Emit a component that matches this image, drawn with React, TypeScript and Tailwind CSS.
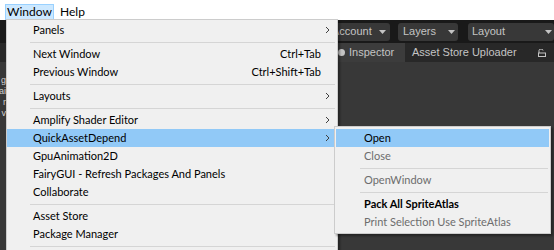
import React from "react";

const menuFont = { fontFamily: 'Lato, "Noto Sans CJK SC", sans-serif' };

function Chevron() {
  return (
    <svg width="5" height="8" viewBox="0 0 5 8" className="block">
      <path d="M1 1 L4 4 L1 7" fill="none" stroke="#404040" strokeWidth="1" />
    </svg>
  );
}

function Caret() {
  return (
    <svg width="7" height="4" viewBox="0 0 7 4" className="block">
      <path d="M0 0 H7 L3.5 4 Z" fill="#c4c4c4" />
    </svg>
  );
}

type Item = {
  label?: string;
  shortcut?: string;
  sub?: boolean;
  sep?: boolean;
  active?: boolean;
  disabled?: boolean;
  bold?: boolean;
};

const mainItems: Item[] = [
  { label: "Panels", sub: true },
  { sep: true },
  { label: "Next Window", shortcut: "Ctrl+Tab" },
  { label: "Previous Window", shortcut: "Ctrl+Shift+Tab" },
  { sep: true },
  { label: "Layouts", sub: true },
  { sep: true },
  { label: "Amplify Shader Editor", sub: true },
  { label: "QuickAssetDepend", sub: true, active: true },
  { label: "GpuAnimation2D" },
  { label: "FairyGUI - Refresh Packages And Panels" },
  { label: "Collaborate" },
  { sep: true },
  { label: "Asset Store" },
  { label: "Package Manager" },
  { sep: true },
];

const subItems: Item[] = [
  { label: "Open", active: true },
  { label: "Close", disabled: true },
  { sep: true },
  { label: "OpenWindow", disabled: true },
  { sep: true },
  { label: "Pack All SpriteAtlas", bold: true },
  { label: "Print Selection Use SpriteAtlas", disabled: true },
];

function Separator({ indent }: { indent: string }) {
  return (
    <div className={`h-[6px] flex items-center ${indent} mr-[2px]`}>
      <div className="h-px flex-1 bg-[#d5d5d5]" />
    </div>
  );
}

export default function App() {
  return (
    <div
      className="relative w-[554px] h-[250px] overflow-hidden bg-[#383838] text-[11px]"
      style={menuFont}
    >
      {/* Menubar */}
      <div className="h-[20px] bg-white flex items-start pt-[4px] pl-[5px] text-[12px]">
        <div className="h-[16px] w-[49px] flex items-center justify-center bg-[#cce8ff] border border-[#99d1ff] text-black leading-none">
          Window
        </div>
        <div className="h-[16px] pl-[6px] flex items-center text-black leading-none">Help</div>
      </div>

      {/* Editor behind */}
      <div style={{ fontFamily: '"Liberation Sans", Arial, sans-serif' }} className="text-[#c4c4c4] text-[11px]">
        <div className="h-[23px] bg-[#191919] flex items-center pl-[326px] gap-[8px]">
          <div className="w-[66px] h-[18px] rounded-[3px] bg-[#383838] flex items-center justify-between pl-[6px] pr-[4px]">
            <span>Account</span>
            <Caret />
          </div>
          <div className="w-[62px] h-[18px] rounded-[3px] bg-[#383838] flex items-center justify-between pl-[5px] pr-[3px]">
            <span>Layers</span>
            <Caret />
          </div>
          <div className="ml-[2px] w-[86px] h-[18px] shrink-0 rounded-[3px] bg-[#383838] flex items-center justify-between pl-[4px] pr-[2px]">
            <span>Layout</span>
            <Caret />
          </div>
        </div>
        <div className="h-[19px] bg-[#282828] flex items-stretch">
          <div className="ml-[336px] w-[69px] bg-[#3c3c3c] flex items-center gap-[4px] pl-[2px]">
            <span className="w-[7px] h-[7px] rounded-full bg-[#c4c4c4]" />
            <span>Inspector</span>
          </div>
          <div className="flex items-center pl-[7px] flex-1">Asset Store Uploader</div>
          <div className="flex items-center pr-[8px]">
            <svg width="8" height="8" viewBox="0 0 8 8" className="block">
              <path d="M1 4 V1.5 A2 1.5 0 0 1 5 1.5" fill="none" stroke="#c4c4c4" strokeWidth="1" />
              <rect x="0.5" y="4" width="7" height="3.5" fill="none" stroke="#c4c4c4" strokeWidth="1" />
            </svg>
          </div>
        </div>
        <div className="w-[6px] overflow-hidden flex flex-col items-end pt-[14px] gap-[2px] text-[9px] leading-[9px] text-[#d0d0d0]">
          <span>g</span>
          <span>ai</span>
          <span>r</span>
          <span>v</span>
        </div>
      </div>

      {/* Window menu */}
      <div className="absolute left-[6px] top-[19px] w-[332px] bg-[#f0f0f0] border border-[#cccccc] shadow-[2px_2px_2px_rgba(0,0,0,0.35)] pt-[1px] pb-[2px] text-black">
        {mainItems.map((it, i) =>
          it.sep ? (
            <Separator key={i} indent="ml-[23px]" />
          ) : (
            <div
              key={i}
              className={`h-[18px] flex items-center pl-[26px] ${it.active ? "bg-[#91c9f7]" : ""}`}
            >
              <span className="flex-1 whitespace-nowrap">{it.label}</span>
              {it.shortcut && <span className="whitespace-nowrap">{it.shortcut}</span>}
              <span className="w-[16px] flex justify-start pl-[4px]">{it.sub && <Chevron />}</span>
            </div>
          )
        )}
      </div>

      {/* Submenu */}
      <div className="absolute left-[334px] top-[126px] w-[217px] bg-[#f0f0f0] border border-[#cccccc] shadow-[2px_2px_2px_rgba(0,0,0,0.35)] py-[2px] text-black">
        {subItems.map((it, i) =>
          it.sep ? (
            <Separator key={i} indent="ml-[25px]" />
          ) : (
            <div
              key={i}
              className={`h-[18px] flex items-center pl-[28px] mx-[1px] ${it.active ? "bg-[#91c9f7]" : ""} ${
                it.disabled ? "text-[#6d6d6d]" : ""
              } ${it.bold ? "font-bold" : ""}`}
            >
              <span className="whitespace-nowrap">{it.label}</span>
            </div>
          )
        )}
      </div>
    </div>
  );
}
